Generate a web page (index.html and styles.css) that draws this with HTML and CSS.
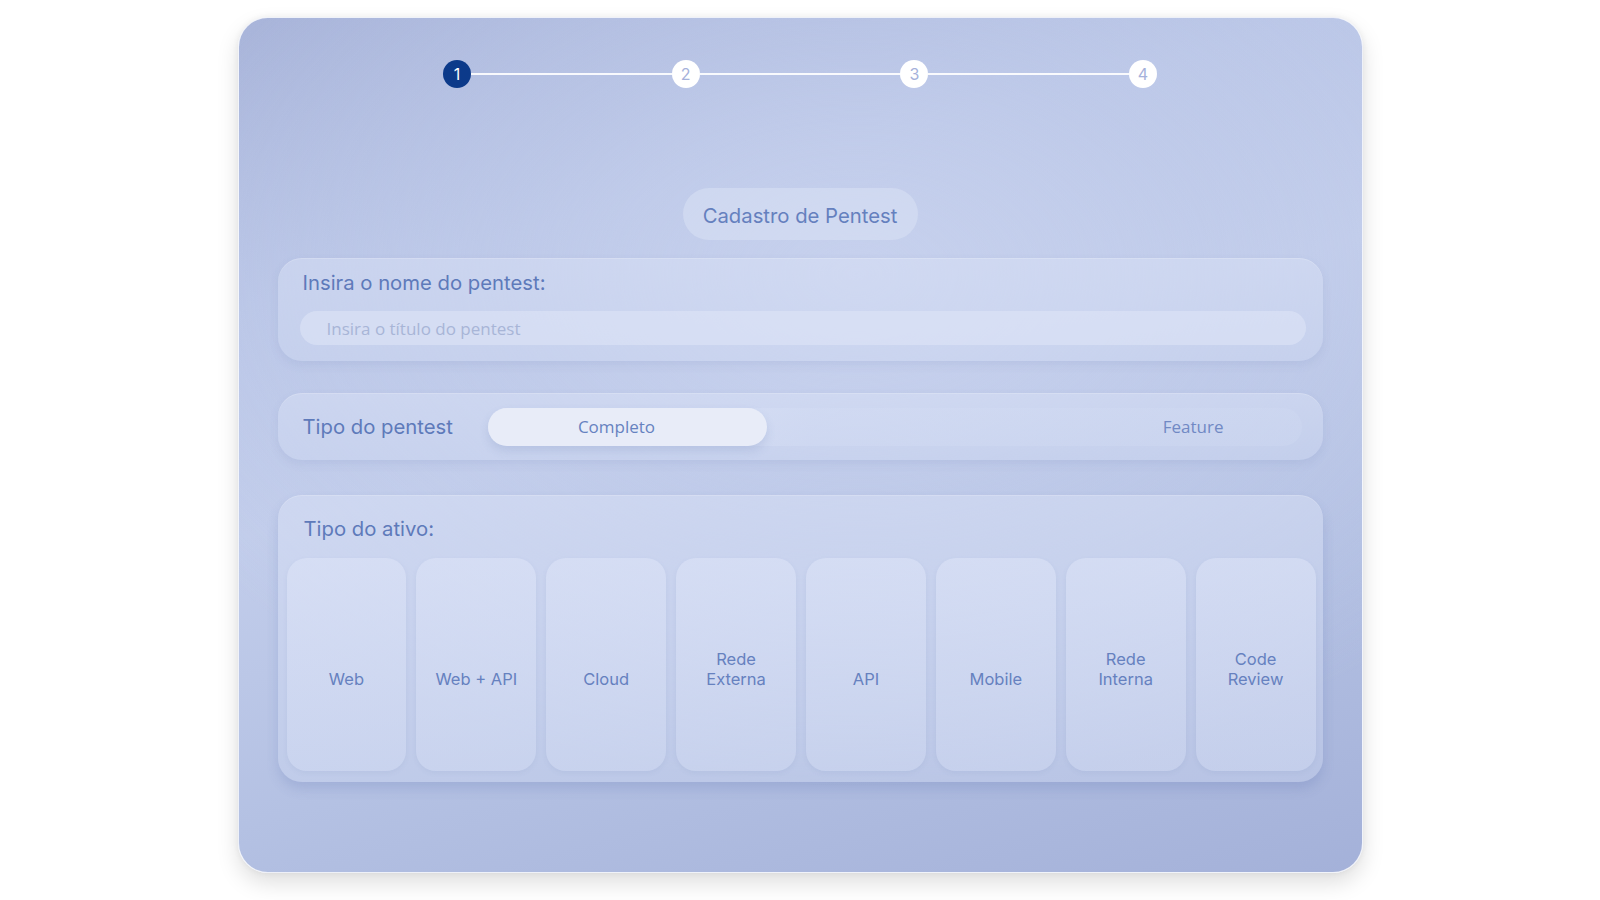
FILE: index.html
```html
<!DOCTYPE html>
<html lang="pt-BR">
<head>
<meta charset="utf-8">
<title>Cadastro de Pentest</title>
<link rel="stylesheet" href="styles.css">
</head>
<body>
<div class="card">
  <div class="stepper">
    <div class="step active">1</div>
    <div class="step-line"></div>
    <div class="step">2</div>
    <div class="step-line"></div>
    <div class="step">3</div>
    <div class="step-line"></div>
    <div class="step">4</div>
  </div>

  <div class="title-pill">Cadastro de Pentest</div>

  <div class="panel panel-name">
    <div class="label">Insira o nome do pentest:</div>
    <input class="text-input" type="text" placeholder="Insira o título do pentest">
  </div>

  <div class="panel panel-type">
    <div class="label type-label">Tipo do pentest</div>
    <div class="toggle">
      <div class="toggle-opt selected">Completo</div>
      <div class="toggle-opt other">Feature</div>
    </div>
  </div>

  <div class="panel panel-asset">
    <div class="label asset-label">Tipo do ativo:</div>
    <div class="tiles">
      <div class="tile"><span>Web</span></div>
      <div class="tile"><span>Web + API</span></div>
      <div class="tile"><span>Cloud</span></div>
      <div class="tile"><span>Rede<br>Externa</span></div>
      <div class="tile"><span>API</span></div>
      <div class="tile"><span>Mobile</span></div>
      <div class="tile"><span>Rede<br>Interna</span></div>
      <div class="tile"><span>Code<br>Review</span></div>
    </div>
  </div>
</div>
</body>
</html>
```

FILE: styles.css
```css
* { box-sizing: border-box; }

html, body {
  margin: 0;
  padding: 0;
  background: #ffffff;
  font-family: Inter, "Open Sans", sans-serif;
}

body {
  padding-top: 17px;
  height: 900px;
  overflow: hidden;
}

.card {
  width: 1125px;
  height: 856px;
  margin: 0 auto;
  border-radius: 30px;
  border: 1px solid rgba(255, 255, 255, 0.8);
  padding: 42px 39px 0 39px;
  background:
    radial-gradient(ellipse 70% 60% at 55% 30%, rgba(200, 210, 238, 0.85) 0%, rgba(194, 205, 235, 0.45) 45%, rgba(194, 205, 235, 0) 100%),
    linear-gradient(165deg, #a6b2d8 0%, #bac6e7 25%, #c2cdeb 45%, #b4c1e3 70%, #a4b1d9 100%);
  box-shadow: 0 10px 22px rgba(0, 0, 0, 0.13), 0 0 6px rgba(0, 0, 0, 0.06);
}

/* Stepper */
.stepper {
  width: 714px;
  margin: 0 auto;
  display: flex;
  align-items: center;
}

.step {
  width: 28px;
  height: 28px;
  border-radius: 50%;
  background: #ffffff;
  color: #a5b1db;
  font-family: Inter, sans-serif;
  font-size: 16px;
  line-height: 28px;
  text-align: center;
  flex: none;
}

.step.active {
  background: #0c3a8a;
  color: #ffffff;
}

.step-line {
  flex: 1;
  height: 2px;
  background: rgba(255, 255, 255, 0.9);
}

/* Title */
.title-pill {
  width: 235px;
  height: 52px;
  margin: 100px auto 0;
  padding-top: 3px;
  border-radius: 26px;
  background: rgba(220, 228, 246, 0.5);
  color: #6580be;
  font-size: 20.3px;
  line-height: 49px;
  text-align: center;
}

/* Panels */
.panel {
  border-radius: 24px;
  background: linear-gradient(180deg, rgba(222, 229, 248, 0.42), rgba(214, 223, 245, 0.32));
  box-shadow: 0 4px 10px rgba(90, 110, 170, 0.1), inset 0 1px 0 rgba(255, 255, 255, 0.18);
}

.label {
  color: #5e7aba;
  font-size: 20.3px;
  line-height: 24px;
}

.panel-name {
  margin-top: 18px;
  height: 103px;
  padding: 13px 17px 0 22px;
}

.panel-name .label {
  padding-left: 3px;
}

.text-input {
  display: block;
  width: 100%;
  height: 34px;
  margin-top: 16px;
  border: none;
  outline: none;
  border-radius: 17px;
  background: rgba(222, 229, 247, 0.6);
  padding: 0 0 0 27px;
  font-family: "Open Sans", "Noto Sans", sans-serif;
  font-size: 17px;
  color: #5e7aba;
}

.text-input::placeholder {
  color: #a8b5d7;
}

.panel-type {
  margin-top: 32px;
  height: 67px;
  display: flex;
  align-items: center;
  padding: 0 21px 0 25px;
}

.type-label {
  width: 185px;
  flex: none;
}

.toggle {
  flex: 1;
  height: 38px;
  border-radius: 19px;
  display: flex;
  background: linear-gradient(90deg, rgba(228, 234, 250, 0.6) 0%, rgba(212, 221, 244, 0.4) 40%, rgba(208, 218, 242, 0.35) 100%);
}

.toggle-opt {
  font-family: "Open Sans", "Noto Sans", sans-serif;
  font-size: 17px;
  line-height: 38px;
  color: #6682c0;
}

.toggle-opt.selected {
  width: 279px;
  flex: none;
  border-radius: 19px;
  background: #e8ecf8;
  text-align: center;
  padding-right: 21px;
  box-shadow: 0 5px 10px rgba(90, 110, 170, 0.16);
}

.toggle-opt.other {
  flex: 1;
  text-align: right;
  padding-right: 78px;
  color: #7189c4;
}

.panel-asset {
  margin-top: 35px;
  height: 287px;
  padding: 22px 7px 0 9px;
  box-shadow: 0 7px 12px rgba(80, 100, 165, 0.18), inset 0 1px 0 rgba(255, 255, 255, 0.18);
}

.asset-label {
  padding-left: 17px;
}

.tiles {
  margin-top: 17px;
  display: flex;
  gap: 10px;
}

.tile {
  flex: 1;
  height: 213px;
  border-radius: 20px;
  background: linear-gradient(180deg, rgba(226, 232, 250, 0.45), rgba(218, 226, 247, 0.35));
  box-shadow: 0 2px 5px rgba(90, 110, 170, 0.08);
  display: flex;
  flex-direction: column;
  justify-content: flex-end;
  align-items: center;
  padding-bottom: 82px;
  text-align: center;
  color: #6681bf;
  font-size: 16.5px;
  line-height: 19.5px;
}
```
